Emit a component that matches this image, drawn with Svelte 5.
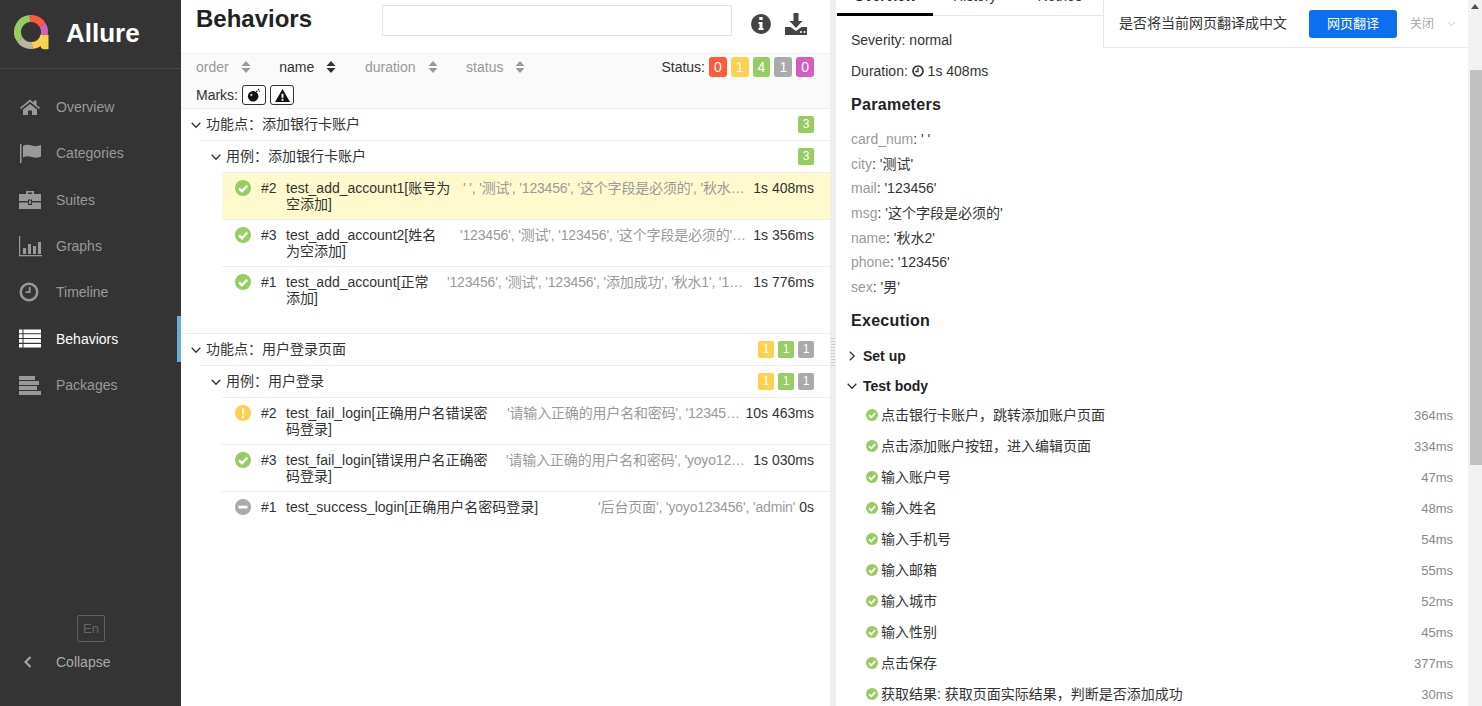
<script>
	const nav_items = [
		{ name: 'Overview', icon: 'home' },
		{ name: 'Categories', icon: 'flag' },
		{ name: 'Suites', icon: 'suite' },
		{ name: 'Graphs', icon: 'graph' },
		{ name: 'Timeline', icon: 'clock' },
		{ name: 'Behaviors', icon: 'list', active: true },
		{ name: 'Packages', icon: 'packages' }
	]

	const sorters = [
		{ name: 'order' },
		{ name: 'name', active: true },
		{ name: 'duration' },
		{ name: 'status' }
	]

	const status_filters = [
		{ count: 0, color: 'failed' },
		{ count: 1, color: 'broken' },
		{ count: 4, color: 'passed' },
		{ count: 1, color: 'skipped' },
		{ count: 0, color: 'unknown' }
	]

	// name_width wraps the name where the report does, gap is what is left before the params
	const groups = [
		{
			title: '功能点\uff1a添加银行卡账户',
			case_title: '用例\uff1a添加银行卡账户',
			stats: [{ count: 3, color: 'passed' }],
			rows: [
				{
					order: 2,
					status: 'passed',
					name: 'test_add_account1[账号为空添加]',
					name_width: 167,
					gap: 10,
					params: "' ', '测试', '123456', '这个字段是必须的', '秋水2', '123456', '男'",
					duration: '1s 408ms',
					selected: true
				},
				{
					order: 3,
					status: 'passed',
					name: 'test_add_account2[姓名为空添加]',
					name_width: 154,
					gap: 20,
					params: "'123456', '测试', '123456', '这个字段是必须的', '', '123456', '男'",
					duration: '1s 356ms'
				},
				{
					order: 1,
					status: 'passed',
					name: 'test_add_account[正常添加]',
					name_width: 146,
					gap: 15,
					params: "'123456', '测试', '123456', '添加成功', '秋水1', '123456', '男'",
					duration: '1s 776ms'
				}
			]
		},
		{
			title: '功能点\uff1a用户登录页面',
			case_title: '用例\uff1a用户登录',
			stats: [
				{ count: 1, color: 'broken' },
				{ count: 1, color: 'passed' },
				{ count: 1, color: 'skipped' }
			],
			rows: [
				{
					order: 2,
					status: 'broken',
					name: 'test_fail_login[正确用户名错误密码登录]',
					name_width: 204,
					gap: 17,
					params: "'请输入正确的用户名和密码', '123456', 'admin'",
					duration: '10s 463ms'
				},
				{
					order: 3,
					status: 'passed',
					name: 'test_fail_login[错误用户名正确密码登录]',
					name_width: 204,
					gap: 16,
					params: "'请输入正确的用户名和密码', 'yoyo123456', 'admin1'",
					duration: '1s 030ms'
				},
				{
					order: 1,
					status: 'skipped',
					name: 'test_success_login[正确用户名密码登录]',
					name_width: 254,
					gap: 10,
					params: "'后台页面', 'yoyo123456', 'admin'",
					duration: '0s'
				}
			]
		}
	]

	const params = [
		{ name: 'card_num', value: "' '" },
		{ name: 'city', value: "'测试'" },
		{ name: 'mail', value: "'123456'" },
		{ name: 'msg', value: "'这个字段是必须的'" },
		{ name: 'name', value: "'秋水2'" },
		{ name: 'phone', value: "'123456'" },
		{ name: 'sex', value: "'男'" }
	]

	const steps = [
		{ name: '点击银行卡账户\uff0c跳转添加账户页面', time: '364ms' },
		{ name: '点击添加账户按钮\uff0c进入编辑页面', time: '334ms' },
		{ name: '输入账户号', time: '47ms' },
		{ name: '输入姓名', time: '48ms' },
		{ name: '输入手机号', time: '54ms' },
		{ name: '输入邮箱', time: '55ms' },
		{ name: '输入城市', time: '52ms' },
		{ name: '输入性别', time: '45ms' },
		{ name: '点击保存', time: '377ms' },
		{ name: '获取结果: 获取页面实际结果\uff0c判断是否添加成功', time: '30ms' }
	]

	const logo_segments = [
		{ from: -5, to: 58, color: '#fd5a3e' },
		{ from: 58, to: 110, color: '#d35ebe' },
		{ from: 110, to: 175, color: '#ffd050' },
		{ from: 175, to: 235, color: '#b8b8a0' },
		{ from: 235, to: 355, color: '#97cc64' }
	]

	function arc(from, to) {
		const r = 13.5
		const point = (deg) => {
			const a = ((deg - 90) * Math.PI) / 180
			return `${(17 + r * Math.cos(a)).toFixed(2)} ${(17 + r * Math.sin(a)).toFixed(2)}`
		}
		return `M${point(from)}A${r} ${r} 0 ${to - from > 180 ? 1 : 0} 1 ${point(to)}`
	}
</script>

{#snippet nav_icon(icon)}
	<svg class="nav-icon" viewBox="0 0 24 24" width="24" height="24" fill="currentColor">
		{#if icon == 'home'}
			<path d="M12 4.500 2 12.800l1 1.300L12 6.800l9 7.300 1-1.300-3.500-2.900V5.500h-2.800v2.100zM5 14.500V20h5v-4.500h4V20h5v-5.500L12 9z" />
		{:else if icon == 'flag'}
			<path d="M2 3h1.500v19H2zM5 5c3-2 6-1.500 9-.5s5 .8 9-.5v11.500c-4 1.500-6 1.500-9 .5s-6-1.500-9 .5z" />
		{:else if icon == 'suite'}
			<path d="M8 3h8v3h6c.6 0 1 .4 1 1v6H14v-1.500h-4V13H1V7c0-.6.4-1 1-1h6zm1.800 1.500V6h4.400V4.500zM1 14.500h9V17h4v-2.500h9V21H1zM11 12.800h2v3h-2z" />
		{:else if icon == 'graph'}
			<path d="M1 2h1.200v19H26v1.200H1zM5 14h3v6H5zM10 10h3v10h-3zM15 12h3v8h-3zM20 8h3v12h-3z" />
		{:else if icon == 'clock'}
			<path fill-rule="evenodd" d="M11 2.500a9.500 9.500 0 1 1 0 19 9.500 9.500 0 0 1 0-19zm0 2.500a7 7 0 1 0 0 14 7 7 0 0 0 0-14zm-.2 2h1.800v6H7.500v-1.800h3.300z" />
		{:else if icon == 'list'}
			<path d="M1 2.500h3.500v3.700H1zM5.500 2.500H23v3.700H5.500zM1 7.300h3.500V11H1zM5.500 7.300H23V11H5.500zM1 12.100h3.500v3.700H1zM5.500 12.100H23v3.700H5.500zM1 16.900h3.500v3.700H1zM5.500 16.900H23v3.700H5.500z" />
		{:else}
			<path d="M1 3h16v4H1zM1 8h20v4H1zM1 13h18v4H1zM1 18h22v4H1z" />
		{/if}
	</svg>
{/snippet}

{#snippet status_icon(status, size)}
	<svg class="status-icon {status}" viewBox="0 0 16 16" width={size} height={size}>
		<circle cx="8" cy="8" r="8" />
		{#if status == 'passed'}
			<path d="M4 8.300 7 11.200 12.200 5.600" fill="none" stroke="#fff" stroke-width="2.400" />
		{:else if status == 'broken'}
			<path d="M7 3h2.200l-.3 6.500H7.300zM7.100 10.800h2V13h-2z" fill="#fff" />
		{:else}
			<path d="M3.500 6.700h9v2.800h-9z" fill="#fff" />
		{/if}
	</svg>
{/snippet}

{#snippet chevron(open)}
	<svg class="chevron" viewBox="0 0 10 10" width="10" height="10">
		{#if open}
			<path d="M.7 2.800 5 7.200l4.300-4.400" />
		{:else}
			<path d="M2.800.7 7.200 5 2.800 9.300" />
		{/if}
	</svg>
{/snippet}

<div class="app">
	<aside class="side-nav">
		<div class="brand">
			<svg class="logo" viewBox="0 0 36 36" width="36" height="36" fill="none" stroke-width="7">
				{#each logo_segments as segment}
					<path d={arc(segment.from, segment.to)} stroke={segment.color} />
				{/each}
				<path d="M26 20h8.500v14c-3 .5-6 .2-7.500-1z" fill="#ffd050" />
			</svg>
			<span class="brand-name">Allure</span>
		</div>
		<nav class="nav-list">
			{#each nav_items as item}
				<div class="nav-item" class:active={item.active}>
					{@render nav_icon(item.icon)}
					<span>{item.name}</span>
				</div>
			{/each}
		</nav>
		<div class="nav-footer">
			<div class="lang">En</div>
			<div class="collapse">
				<svg viewBox="0 0 10 14" width="10" height="14" fill="none" stroke="currentColor" stroke-width="2">
					<path d="M7.500 2 2.500 7l5 5" />
				</svg>
				<span>Collapse</span>
			</div>
		</div>
	</aside>

	<main class="tree-pane">
		<header class="pane-header">
			<h2>Behaviors</h2>
			<input class="search" type="text" />
			<svg class="head-icon info" viewBox="0 0 20 20" width="20" height="20">
				<path fill-rule="evenodd" d="M10 0a10 10 0 1 1 0 20 10 10 0 0 1 0-20zM8.300 3v3h3.400V3zM7.500 8v2h1v4h-1v2h5v-2h-1V8z" />
			</svg>
			<svg class="head-icon download" viewBox="0 0 22 22" width="22" height="22">
				<path d="M8.500 0h5v8h4L11 15 4.500 8h4zM0 14h5.500l5.500 4 5.500-4H22v8H0zm15 5a1 1 0 1 0 2 0 1 1 0 0 0-2 0zm3.500 0a1 1 0 1 0 2 0 1 1 0 0 0-2 0z" />
			</svg>
		</header>

		<div class="toolbar">
			<div class="toolbar-line">
				{#each sorters as sorter}
					<div class="sorter" class:active={sorter.active}>
						<span>{sorter.name}</span>
						<svg viewBox="0 0 10 12" width="10" height="12">
							<path d="M5 0l4.500 5h-9zM5 12 .5 7h9z" />
						</svg>
					</div>
				{/each}
				<div class="status-filter">
					<span>Status:</span>
					{#each status_filters as item}
						<span class="badge large {item.color}">{item.count}</span>
					{/each}
				</div>
			</div>
			<div class="marks">
				<span>Marks:</span>
				<button class="mark" aria-label="flaky">
					<svg viewBox="0 0 16 16" width="14" height="14">
						<circle cx="7" cy="9.500" r="6" fill="#111" />
						<path d="M10.500 4.500 12 3M13 1l.5 1.500M14.500 4l-1-.5" stroke="#111" stroke-width="1.300" />
						<circle cx="5" cy="8" r="1.300" fill="#ccc" />
					</svg>
				</button>
				<button class="mark" aria-label="new failed">
					<svg viewBox="0 0 16 16" width="15" height="15">
						<path fill-rule="evenodd" d="M8 1 16 15H0zM7 6v4.500h2V6zm0 5.500v2h2v-2z" fill="#111" />
					</svg>
				</button>
			</div>
		</div>

		<div class="tree">
			{#each groups as group}
				<section class="group">
					<div class="group-row level-one">
						{@render chevron(true)}
						<span class="group-title">{group.title}</span>
						<div class="stats">
							{#each group.stats as stat}
								<span class="badge {stat.color}">{stat.count}</span>
							{/each}
						</div>
					</div>
					<div class="group-row level-two">
						{@render chevron(true)}
						<span class="group-title">{group.case_title}</span>
						<div class="stats">
							{#each group.stats as stat}
								<span class="badge {stat.color}">{stat.count}</span>
							{/each}
						</div>
					</div>
					{#each group.rows as row}
						<div class="test-row" class:selected={row.selected}>
							{@render status_icon(row.status, 16)}
							<span class="test-order">#{row.order}</span>
							<span class="test-name" style="width: {row.name_width}px; margin-right: {row.gap}px">{row.name}</span>
							<span class="test-params">{row.params}</span>
							<span class="test-duration">{row.duration}</span>
						</div>
					{/each}
				</section>
			{/each}
		</div>
	</main>

	<div class="gutter">
		<div class="gutter-handle"></div>
	</div>

	<section class="detail-pane">
		<div class="tabs">
			<span class="tab active">Overview</span>
			<span class="tab">History</span>
			<span class="tab">Retries</span>
		</div>
		<div class="detail-body">
			<p class="meta">Severity: normal</p>
			<p class="meta">
				Duration:
				<svg viewBox="0 0 12 12" width="12" height="12" fill="none" stroke="#333" stroke-width="1.700">
					<circle cx="6" cy="6" r="5" />
					<path d="M6 2.800V6.500H3.200" stroke-width="1.300" />
				</svg>
				1s 408ms
			</p>
			<h3>Parameters</h3>
			<div class="param-list">
				{#each params as param}
					<div class="param"><span class="param-name">{param.name}</span>: {param.value}</div>
				{/each}
			</div>
			<h3 class="execution">Execution</h3>
			<div class="stage">{@render chevron(false)}<span>Set up</span></div>
			<div class="stage">{@render chevron(true)}<span>Test body</span></div>
			<div class="steps">
				{#each steps as step}
					<div class="step">
						{@render status_icon('passed', 12)}
						<span class="step-name">{step.name}</span>
						<span class="step-time">{step.time}</span>
					</div>
				{/each}
			</div>
		</div>

		<div class="translate-bar">
			<span class="translate-text">是否将当前网页翻译成中文</span>
			<button class="translate-button">网页翻译</button>
			<span class="translate-close">关闭</span>
			<svg viewBox="0 0 10 6" width="9" height="6" fill="none" stroke="#c4c4c4" stroke-width="1">
				<path d="M1 .8 5 4.800 9 .8" />
			</svg>
		</div>
	</section>

	<div class="scrollbar">
		<div class="scroll-arrow"></div>
		<div class="scroll-thumb"></div>
	</div>
</div>

<style>
	:global(body) {
		margin: 0;
		background: #fff;
	}
	.app {
		display: flex;
		height: 706px;
		overflow: hidden;
		font-family: 'Liberation Sans', 'Noto Sans CJK SC', sans-serif;
		font-size: 14px;
		color: #333;
	}

	/* side nav */
	.side-nav {
		width: 181px;
		flex: none;
		display: flex;
		flex-direction: column;
		background: #343434;
		color: #999;
	}
	.brand {
		height: 69px;
		flex: none;
		box-sizing: border-box;
		display: flex;
		align-items: center;
		padding: 0 0 2px 14px;
		border-bottom: 1px solid #4a4a4a;
	}
	.brand-name {
		margin-left: 16px;
		font-size: 26px;
		font-weight: 700;
		color: #fff;
	}
	.nav-list {
		padding-top: 15px;
	}
	.nav-item {
		position: relative;
		height: 46.33px;
		display: flex;
		align-items: center;
		padding-left: 18px;
		gap: 14px;
	}
	.nav-icon {
		flex: none;
	}
	.nav-item.active {
		color: #fff;
	}
	.nav-item.active::after {
		content: '';
		position: absolute;
		right: 0;
		top: 0;
		bottom: 0;
		width: 4px;
		background: #6fa9d8;
	}
	.nav-footer {
		margin-top: auto;
		padding-bottom: 36px;
	}
	.lang {
		width: 26px;
		height: 25px;
		margin: 0 0 12px 77px;
		border: 1px solid #5f5f5f;
		border-radius: 2px;
		display: flex;
		align-items: center;
		justify-content: center;
		font-size: 13px;
		color: #666;
	}
	.collapse {
		display: flex;
		align-items: center;
		padding-left: 23px;
		gap: 23px;
		color: #aaa;
	}

	/* tree pane */
	.tree-pane {
		width: 649px;
		flex: none;
		display: flex;
		flex-direction: column;
	}
	.pane-header {
		height: 53px;
		flex: none;
		display: flex;
		align-items: flex-start;
		padding-left: 15px;
		border-bottom: 1px solid #f0f0f0;
	}
	h2 {
		width: 186px;
		margin: 5px 0 0;
		font-size: 24px;
		line-height: 28px;
		font-weight: 700;
		color: #222;
	}
	.search {
		width: 350px;
		height: 31px;
		margin-top: 5px;
		padding: 0;
		box-sizing: border-box;
		border: 1px solid #e4e4e4;
		outline: none;
	}
	.head-icon {
		fill: #444;
		flex: none;
		margin-top: 14px;
	}
	.info {
		margin-left: 19px;
	}
	.download {
		margin-top: 13px;
		margin-left: 14px;
	}
	.toolbar {
		height: 55px;
		flex: none;
		box-sizing: border-box;
		padding: 3px 16px 0 15px;
		background: #fafafa;
		border-bottom: 1px solid #eee;
	}
	.toolbar-line {
		display: flex;
		align-items: center;
		gap: 28.6px;
		height: 20px;
	}
	.sorter {
		display: flex;
		align-items: center;
		gap: 12px;
		color: #999;
	}
	.sorter svg {
		fill: #999;
	}
	.sorter.active {
		color: #333;
	}
	.sorter.active svg {
		fill: #333;
	}
	.status-filter {
		margin-left: auto;
		display: flex;
		align-items: center;
		gap: 4px;
	}
	.badge {
		display: inline-block;
		min-width: 16px;
		height: 17px;
		line-height: 17px;
		text-align: center;
		font-size: 12px;
		color: #fff;
		border-radius: 2px;
	}
	.badge.large {
		min-width: 17.8px;
		height: 20px;
		line-height: 20px;
		font-size: 14px;
		border-radius: 3px;
	}
	.badge.failed {
		background: #fd5a3e;
	}
	.badge.broken {
		background: #ffd050;
	}
	.badge.passed {
		background: #97cc64;
	}
	.badge.skipped {
		background: #aaa;
	}
	.badge.unknown {
		background: #d35ebe;
	}
	.marks {
		display: flex;
		align-items: center;
		gap: 4px;
		height: 20px;
		margin-top: 8px;
	}
	.mark {
		width: 24px;
		height: 20px;
		padding: 0;
		display: flex;
		align-items: center;
		justify-content: center;
		background: #fff;
		border: 1px solid #333;
		border-radius: 3px;
	}

	/* tree */
	.tree {
		flex: 1;
		min-height: 0;
	}
	.group {
		padding-bottom: 20px;
		border-bottom: 1px solid #eee;
	}
	.group:last-child {
		border-bottom: none;
	}
	.group-row {
		display: flex;
		align-items: center;
		height: 31px;
		padding-right: 16px;
		gap: 5px;
		color: #333;
	}
	.group-title {
		padding-bottom: 4px;
	}
	.level-one {
		padding-left: 10px;
		position: relative;
	}
	.level-one::after {
		content: '';
		position: absolute;
		left: 19px;
		right: 0;
		bottom: -1px;
		height: 1px;
		background: #eee;
	}
	.level-two {
		margin-top: 1px;
		padding-left: 30px;
	}
	.chevron {
		flex: none;
		fill: none;
		stroke: #333;
		stroke-width: 1.300;
	}
	.stats {
		margin-left: auto;
		display: flex;
		gap: 4px;
	}
	.test-row {
		display: flex;
		align-items: flex-start;
		margin-left: 41px;
		padding: 7px 16px 7px 13px;
		min-height: 32px;
		line-height: 16px;
		border-top: 1px solid #eee;
	}
	.test-row:last-child {
		min-height: 16px;
	}
	.test-row.selected {
		background: #fffacd;
	}
	.status-icon {
		flex: none;
	}
	.status-icon.passed {
		fill: #97cc64;
	}
	.status-icon.broken {
		fill: #ffd050;
	}
	.status-icon.skipped {
		fill: #aaa;
	}
	.test-order {
		flex: none;
		width: 25px;
		margin-left: 10px;
	}
	.test-name {
		flex: none;
	}
	.test-params {
		flex: 1;
		min-width: 0;
		white-space: nowrap;
		overflow: hidden;
		text-overflow: ellipsis;
		text-align: right;
		letter-spacing: -0.17px;
		color: #999;
	}
	.test-duration {
		flex: none;
		margin-left: 4px;
		white-space: nowrap;
	}

	/* gutter */
	.gutter {
		width: 6px;
		flex: none;
		background: #eee;
		display: flex;
		align-items: center;
	}
	.gutter-handle {
		width: 4px;
		height: 28px;
		margin: -2px 0 0 1px;
		background: repeating-linear-gradient(#ccc 0 1.500px, transparent 1.500px 3px);
	}

	/* detail pane */
	.detail-pane {
		position: relative;
		flex: 1;
		min-width: 0;
	}
	.tabs {
		display: flex;
		height: 48px;
		margin-top: -32px;
		box-sizing: border-box;
		border-bottom: 1px solid #e5e5e5;
		padding-left: 1px;
	}
	.tab {
		box-sizing: border-box;
		padding: 20px 21px 0 20px;
		height: 48px;
		line-height: 16px;
		color: #333;
	}
	.tab.active {
		padding: 20px 0 0;
		font-weight: 700;
		color: #222;
		border-bottom: 3px solid #000;
		width: 96px;
		text-align: center;
	}
	.detail-body {
		padding: 16px 15px 0;
	}
	.meta {
		margin: 0 0 15px;
		line-height: 16px;
	}
	.meta svg {
		vertical-align: -1px;
	}
	h3 {
		margin: 0;
		font-size: 16px;
		line-height: 22px;
		font-weight: 700;
		color: #222;
		letter-spacing: 0.3px;
	}
	.param-list {
		margin: 11px 0 10px;
	}
	.param {
		height: 24.7px;
		line-height: 24.7px;
	}
	.param-name {
		color: #999;
	}
	.execution {
		margin-bottom: 9px;
	}
	.stage {
		display: flex;
		align-items: center;
		gap: 2px;
		height: 30px;
		font-weight: 700;
		margin-left: -4px;
		color: #222;
	}
	.stage span {
		margin-left: 4px;
	}
	.steps {
		padding-left: 15px;
		margin-top: -1px;
	}
	.step {
		display: flex;
		align-items: center;
		height: 31px;
	}
	.step-name {
		margin-left: 3px;
		padding-bottom: 2px;
	}
	.step-time {
		margin-left: auto;
		color: #888;
		font-size: 13px;
	}

	/* browser translate prompt */
	.translate-bar {
		position: absolute;
		top: 0;
		right: 0;
		width: 365px;
		height: 48px;
		box-sizing: border-box;
		padding-left: 15px;
		display: flex;
		align-items: center;
		background: #fff;
		border-left: 1px solid #e8e8e8;
		border-bottom: 1px solid #e8e8e8;
	}
	.translate-text {
		width: 190px;
		padding-bottom: 4px;
		color: #333;
	}
	.translate-button {
		width: 88px;
		height: 28px;
		padding: 0 0 3px;
		border: none;
		border-radius: 3px;
		background: #0d6fee;
		color: #fff;
		font-family: inherit;
		font-size: 13px;
	}
	.translate-close {
		margin: 0 13px;
		padding-bottom: 3px;
		font-size: 12px;
		color: #aaa;
	}

	/* page scrollbar */
	.scrollbar {
		width: 14px;
		flex: none;
		background: #f1f1f1;
		position: relative;
	}
	.scroll-arrow {
		width: 0;
		margin: 4px auto 0;
		border: 4px solid transparent;
		border-top: none;
		border-bottom: 5px solid #505050;
	}
	.scroll-thumb {
		position: absolute;
		top: 70px;
		left: 2px;
		right: 0;
		height: 395px;
		background: #c1c1c1;
	}
</style>
